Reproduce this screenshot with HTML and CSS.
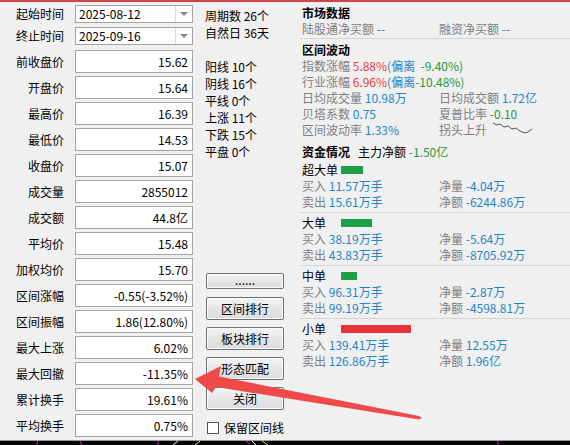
FILE: index.html
```html
<!DOCTYPE html>
<html lang="zh-CN">
<head>
<meta charset="utf-8">
<title>区间统计</title>
<link rel="stylesheet" href="styles.css">
</head>
<body>
<div class="topbar"></div>
<div class="main">
  <div class="left">
    <div class="row"><span class="lbl">起始时间</span><div class="combo"><span class="cv">2025-08-12</span><span class="dd"><i class="tri"></i></span></div></div>
    <div class="row r2"><span class="lbl">终止时间</span><div class="combo"><span class="cv">2025-09-16</span><span class="dd"><i class="tri"></i></span></div></div>
    <div class="row r3"><span class="lbl">前收盘价</span><div class="field">15.62</div></div>
    <div class="row"><span class="lbl">开盘价</span><div class="field">15.64</div></div>
    <div class="row"><span class="lbl">最高价</span><div class="field">16.39</div></div>
    <div class="row"><span class="lbl">最低价</span><div class="field">14.53</div></div>
    <div class="row"><span class="lbl">收盘价</span><div class="field">15.07</div></div>
    <div class="row"><span class="lbl">成交量</span><div class="field">2855012</div></div>
    <div class="row"><span class="lbl">成交额</span><div class="field">44.8亿</div></div>
    <div class="row"><span class="lbl">平均价</span><div class="field">15.48</div></div>
    <div class="row"><span class="lbl">加权均价</span><div class="field">15.70</div></div>
    <div class="row"><span class="lbl">区间涨幅</span><div class="field">-0.55(-3.52%)</div></div>
    <div class="row"><span class="lbl">区间振幅</span><div class="field">1.86(12.80%)</div></div>
    <div class="row"><span class="lbl">最大上涨</span><div class="field">6.02%</div></div>
    <div class="row"><span class="lbl">最大回撤</span><div class="field">-11.35%</div></div>
    <div class="row"><span class="lbl">累计换手</span><div class="field">19.61%</div></div>
    <div class="row"><span class="lbl">平均换手</span><div class="field">0.75%</div></div>
  </div>

  <div class="mid">
    <div class="stats">
      <div class="sl">周期数 26个</div>
      <div class="sl">自然日 36天</div>
      <div class="sl"></div>
      <div class="sl">阳线 10个</div>
      <div class="sl">阴线 16个</div>
      <div class="sl">平线 0个</div>
      <div class="sl">上涨 11个</div>
      <div class="sl">下跌 15个</div>
      <div class="sl">平盘 0个</div>
    </div>
    <div class="btns">
      <div class="btn small">......</div>
      <div class="btn first">区间排行</div>
      <div class="btn">板块排行</div>
      <div class="btn">形态匹配</div>
      <div class="btn">关闭</div>
      <label class="chk"><span class="box"></span><span>保留区间线</span></label>
    </div>
  </div>

  <div class="right">
    <div class="ln h top">市场数据</div>
    <div class="ln g2"><span><span class="g">陆股通净买额</span> <span class="b">--</span></span><span><span class="g">融资净买额</span> <span class="b">--</span></span></div>
    <div class="sep"></div>
    <div class="ln h sec">区间波动</div>
    <div class="ln"><span class="g">指数涨幅</span> <span class="r">5.88%</span><span class="b">(偏离</span><span class="sp">  </span><span class="gr">-9.40%)</span></div>
    <div class="ln"><span class="g">行业涨幅</span> <span class="r">6.96%</span><span class="b">(偏离</span><span class="gr">-10.48%)</span></div>
    <div class="ln g2"><span><span class="g">日均成交量</span> <span class="b">10.98万</span></span><span><span class="g">日均成交额</span> <span class="b">1.72亿</span></span></div>
    <div class="ln g2"><span><span class="g">贝塔系数</span> <span class="b">0.75</span></span><span><span class="g">夏普比率</span> <span class="gr">-0.10</span></span></div>
    <div class="ln g2"><span><span class="g">区间波动率</span> <span class="b">1.33%</span></span><span class="trend"><span class="g">拐头上升</span><svg class="spark" width="42" height="16" viewBox="0 0 42 16"><polyline points="1,1 5,3 8,2 12,5 16,4 20,7 24,6 28,9 33,11 36,10 40,7" fill="none" stroke="#555" stroke-width="1"/></svg></span></div>
    <div class="ln fund"><span class="h">资金情况</span>&nbsp;&nbsp;&nbsp;主力净额 <span class="gr">-1.50亿</span></div>

    <div class="ln kind"><span class="lab">超大单</span><span class="bar green" style="width:22px"></span></div>
    <div class="ln g2"><span><span class="g">买入</span> <span class="b">11.57万手</span></span><span><span class="g">净量</span> <span class="b">-4.04万</span></span></div>
    <div class="ln g2"><span><span class="g">卖出</span> <span class="b">15.61万手</span></span><span><span class="g">净额</span> <span class="b">-6244.86万</span></span></div>

    <div class="blk">
      <div class="ln kind"><span class="lab">大单</span><span class="bar green" style="width:31px"></span></div>
      <div class="ln g2"><span><span class="g">买入</span> <span class="b">38.19万手</span></span><span><span class="g">净量</span> <span class="b">-5.64万</span></span></div>
      <div class="ln g2"><span><span class="g">卖出</span> <span class="b">43.83万手</span></span><span><span class="g">净额</span> <span class="b">-8705.92万</span></span></div>
    </div>
    <div class="blk">
      <div class="ln kind"><span class="lab">中单</span><span class="bar green" style="width:16px"></span></div>
      <div class="ln g2"><span><span class="g">买入</span> <span class="b">96.31万手</span></span><span><span class="g">净量</span> <span class="b">-2.87万</span></span></div>
      <div class="ln g2"><span><span class="g">卖出</span> <span class="b">99.19万手</span></span><span><span class="g">净额</span> <span class="b">-4598.81万</span></span></div>
    </div>
    <div class="blk">
      <div class="ln kind"><span class="lab">小单</span><span class="bar red" style="width:70px"></span></div>
      <div class="ln g2"><span><span class="g">买入</span> <span class="b">139.41万手</span></span><span><span class="g">净量</span> <span class="b">12.55万</span></span></div>
      <div class="ln g2"><span><span class="g">卖出</span> <span class="b">126.86万手</span></span><span><span class="g">净额</span> <span class="b">1.96亿</span></span></div>
    </div>
  </div>
</div>
<div class="bottom">
  <svg width="570" height="4" viewBox="0 0 570 4">
    <line x1="36" y1="4" x2="38" y2="0" stroke="#e020e0" stroke-width="1"/>
    <line x1="80" y1="0" x2="82" y2="4" stroke="#e020e0" stroke-width="1"/>
    <line x1="158" y1="0" x2="158" y2="4" stroke="#e020e0" stroke-width="1"/>
    <line x1="173" y1="4" x2="178" y2="0" stroke="#ffffff" stroke-width="1"/>
    <line x1="195" y1="4" x2="200" y2="0" stroke="#f0f020" stroke-width="1"/>
    <line x1="246" y1="0" x2="250" y2="3" stroke="#e020e0" stroke-width="1"/>
    <line x1="252" y1="0" x2="256" y2="4" stroke="#ffffff" stroke-width="1"/>
    <line x1="262" y1="0" x2="268" y2="4" stroke="#f0f020" stroke-width="1"/>
    <line x1="498" y1="0" x2="498" y2="4" stroke="#e020e0" stroke-width="1"/>
  </svg>
</div>
<svg class="arrow" width="570" height="445" viewBox="0 0 570 445">
  <polygon points="195,379 221,366 219,376.5 419,416 422,418 419,419.5 216,387 212,393" fill="#ef4a4a"/>
</svg>
</body>
</html>
```

FILE: styles.css
```css
* { box-sizing: border-box; }
html, body {
  margin: 0;
  padding: 0;
}
body {
  width: 570px;
  height: 445px;
  overflow: hidden;
  position: relative;
  background: #f0f0f0;
  font-family: "Noto Sans CJK SC", "Noto Sans", sans-serif;
  font-size: 12px;
  color: #000;
}
.topbar {
  height: 2px;
  background: #cc4646;
}
.main {
  display: flex;
  height: 438px;
}

/* left column */
.left {
  width: 193px;
  padding-top: 3px;
  display: flex;
  flex-direction: column;
  gap: 3px;
}
.row {
  display: flex;
  align-items: center;
}
.row.r2 { margin-top: 1px; }
.row.r3 { margin-top: 2px; }
.lbl {
  width: 64px;
  margin-right: 11px;
  text-align: right;
  line-height: 16px;
  white-space: nowrap;
}
.combo {
  width: 118px;
  height: 18px;
  border: 1px solid #a3a3a3;
  background: #fff;
  display: flex;
}
.cv {
  flex: 1;
  padding-left: 3px;
  line-height: 16px;
}
.dd {
  width: 17px;
  border-left: 1px solid #dadada;
  display: flex;
  align-items: center;
  justify-content: center;
}
.tri {
  width: 0;
  height: 0;
  border-left: 4px solid transparent;
  border-right: 4px solid transparent;
  border-top: 4px solid #8a8a8a;
}
.field {
  width: 118px;
  height: 23px;
  border: 1px solid #a3a3a3;
  background: #fff;
  text-align: right;
  padding-right: 4px;
  line-height: 21px;
  white-space: nowrap;
}

/* middle column */
.mid {
  width: 107px;
  display: flex;
  flex-direction: column;
  padding-top: 5px;
  padding-bottom: 5px;
}
.stats {
  padding-left: 12px;
}
.sl {
  height: 17px;
  line-height: 17px;
  white-space: nowrap;
}
.btns {
  margin-top: auto;
  padding-left: 13px;
  display: flex;
  flex-direction: column;
}
.btn {
  width: 78px;
  height: 23px;
  border: 1px solid #707070;
  border-radius: 2px;
  background: linear-gradient(#f4f4f4, #e6e6e6 50%, #dcdcdc);
  box-shadow: inset 0 0 0 1px #fbfbfb;
  text-align: center;
  line-height: 21px;
  margin-bottom: 7px;
}
.btn.small {
  height: 16px;
  line-height: 12px;
  margin-bottom: 8px;
}
.chk {
  display: flex;
  align-items: center;
  height: 15px;
  margin-top: 3px;
}
.chk .box {
  width: 12px;
  height: 12px;
  border: 1px solid #555;
  background: #fff;
  margin-left: 1px;
  margin-right: 5px;
}

/* right panel */
.right {
  flex: 1;
  display: flex;
  flex-direction: column;
}
.ln {
  height: 16px;
  line-height: 16px;
  padding-left: 2px;
  white-space: pre;
}
.h { font-weight: bold; }
.top { margin-top: 3px; }
.sep {
  height: 1px;
  background: #d4d4d4;
  margin-top: 1px;
}
.sec { margin-top: 3px; }
.g2 {
  display: grid;
  grid-template-columns: 137px 1fr;
}
.g { color: #7f7f7f; }
.b { color: #1f86c6; }
.r { color: #e83c3c; }
.gr { color: #26993e; }
.trend {
  display: flex;
  align-items: center;
}
.spark {
  margin-left: 5px;
}
.fund {
  margin-top: 6px;
  margin-bottom: 2px;
}
.kind {
  display: flex;
  align-items: center;
}
.lab {
  width: 39px;
}
.bar {
  height: 8px;
}
.bar.green { background: #1f9e48; }
.bar.red { background: #e8313a; }
.blk {
  border-top: 1px solid #d4d4d4;
  margin-top: 2px;
  padding-top: 2px;
}

/* bottom chart strip */
.bottom {
  height: 5px;
  border-top: 1px solid #9c9c9c;
  background: #000;
}
.bottom svg { display: block; }

/* annotation arrow overlay */
.arrow {
  position: absolute;
  left: 0;
  top: 0;
  pointer-events: none;
}
```
